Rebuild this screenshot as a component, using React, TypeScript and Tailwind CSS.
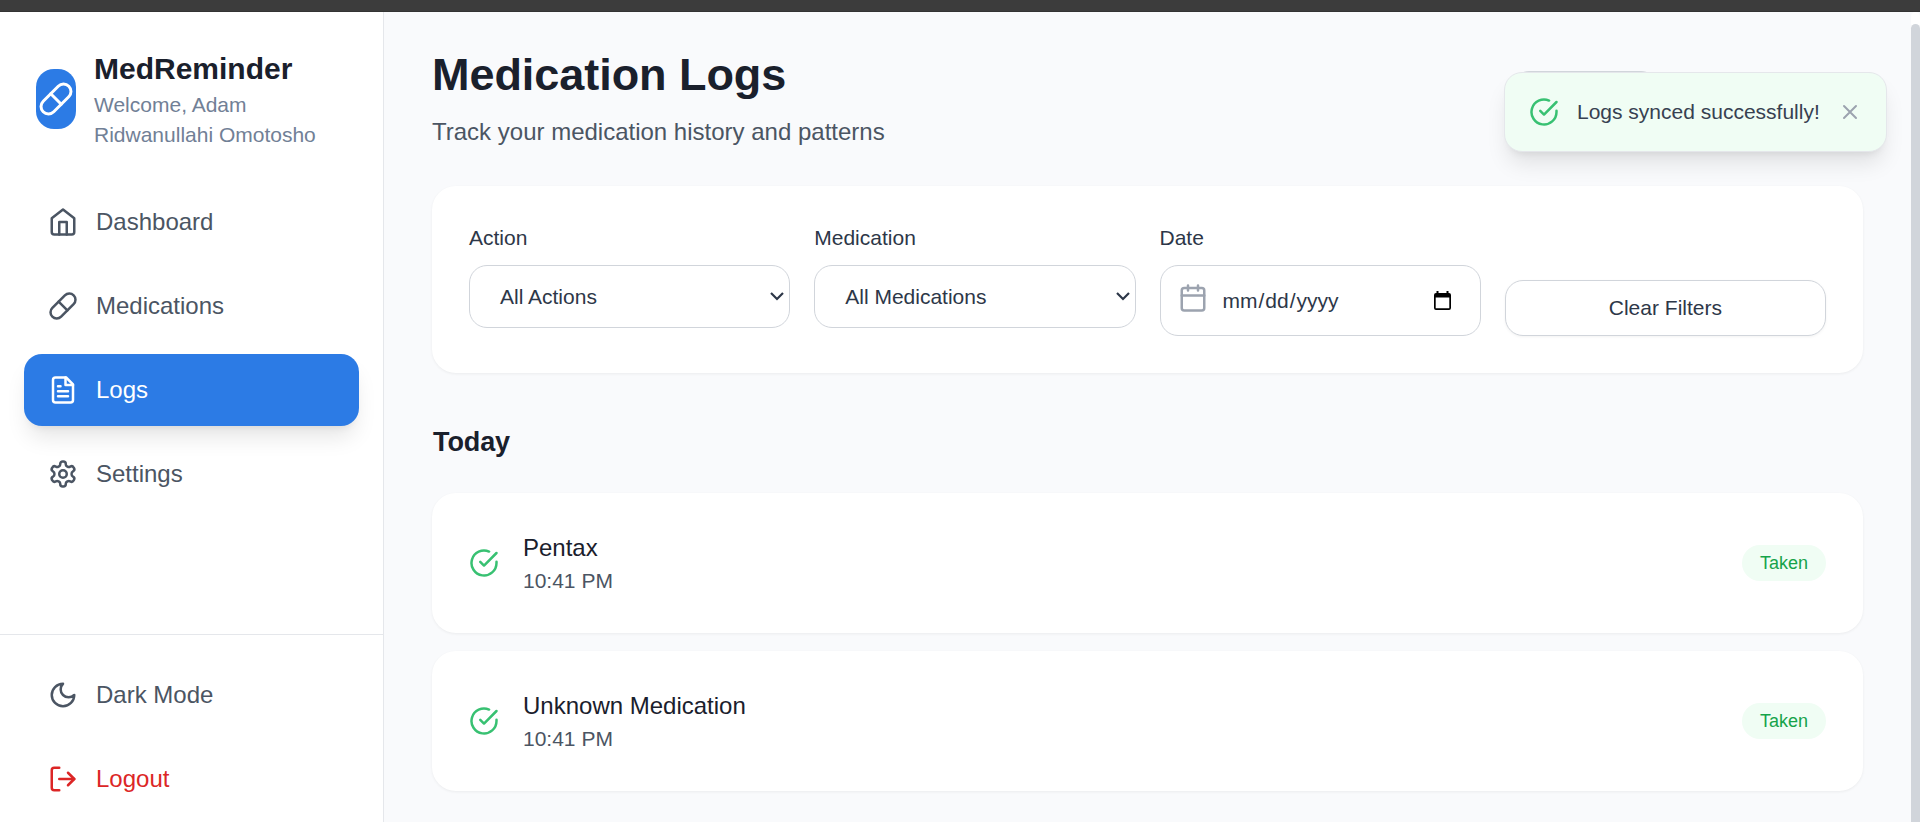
import type { ReactNode } from 'react';

type IconProps = { className?: string; children?: ReactNode };

function Icon({ className = 'size-[30px]', children }: IconProps) {
  return (
    <svg
      viewBox="0 0 24 24"
      fill="none"
      stroke="currentColor"
      strokeWidth="2"
      strokeLinecap="round"
      strokeLinejoin="round"
      className={`${className} shrink-0`}
    >
      {children}
    </svg>
  );
}

const Pill = ({ className }: IconProps) => (
  <Icon className={className}>
    <path d="m10.5 20.5 10-10a4.95 4.95 0 1 0-7-7l-10 10a4.95 4.95 0 1 0 7 7Z" />
    <path d="m8.5 8.5 7 7" />
  </Icon>
);

const Home = () => (
  <Icon>
    <path d="m3 9 9-7 9 7v11a2 2 0 0 1-2 2H5a2 2 0 0 1-2-2z" />
    <polyline points="9 22 9 12 15 12 15 22" />
  </Icon>
);

const FileText = () => (
  <Icon>
    <path d="M14.5 2H6a2 2 0 0 0-2 2v16a2 2 0 0 0 2 2h12a2 2 0 0 0 2-2V7.5L14.5 2z" />
    <polyline points="14 2 14 8 20 8" />
    <path d="M16 13H8M16 17H8M10 9H8" />
  </Icon>
);

const Settings = () => (
  <Icon>
    <path d="M12.22 2h-.44a2 2 0 0 0-2 2v.18a2 2 0 0 1-1 1.73l-.43.25a2 2 0 0 1-2 0l-.15-.08a2 2 0 0 0-2.73.73l-.22.38a2 2 0 0 0 .73 2.73l.15.1a2 2 0 0 1 1 1.72v.51a2 2 0 0 1-1 1.74l-.15.09a2 2 0 0 0-.73 2.73l.22.38a2 2 0 0 0 2.73.73l.15-.08a2 2 0 0 1 2 0l.43.25a2 2 0 0 1 1 1.73V20a2 2 0 0 0 2 2h.44a2 2 0 0 0 2-2v-.18a2 2 0 0 1 1-1.73l.43-.25a2 2 0 0 1 2 0l.15.08a2 2 0 0 0 2.73-.73l.22-.39a2 2 0 0 0-.73-2.73l-.15-.08a2 2 0 0 1-1-1.74v-.5a2 2 0 0 1 1-1.74l.15-.09a2 2 0 0 0 .73-2.73l-.22-.38a2 2 0 0 0-2.73-.73l-.15.08a2 2 0 0 1-2 0l-.43-.25a2 2 0 0 1-1-1.73V4a2 2 0 0 0-2-2z" />
    <circle cx="12" cy="12" r="3" />
  </Icon>
);

const Moon = () => (
  <Icon>
    <path d="M12 3a6 6 0 0 0 9 9 9 9 0 1 1-9-9Z" />
  </Icon>
);

const LogOut = () => (
  <Icon>
    <path d="M9 21H5a2 2 0 0 1-2-2V5a2 2 0 0 1 2-2h4" />
    <polyline points="16 17 21 12 16 7" />
    <path d="M21 12H9" />
  </Icon>
);

const CheckCircle = () => (
  <Icon className="size-[30px] text-[#38c172]">
    <path d="M22 11.08V12a10 10 0 1 1-5.93-9.14" />
    <polyline points="22 4 12 14.01 9 11.01" />
  </Icon>
);

const Calendar = () => (
  <Icon className="size-[30px] text-[#9ca3af]">
    <rect x="3" y="4" width="18" height="18" rx="2" />
    <path d="M16 2v4M8 2v4M3 10h18" />
  </Icon>
);

function NavItem({ icon, label, tone = 'text-[#4b5563]' }: { icon: ReactNode; label: string; tone?: string }) {
  return (
    <button className={`flex h-[72px] w-full items-center gap-[18px] rounded-[18px] px-6 text-2xl leading-9 ${tone}`}>
      {icon}
      <span>{label}</span>
    </button>
  );
}

function SelectField({ label, value }: { label: string; value: string }) {
  return (
    <div>
      <div className="mb-3 leading-[30px]">{label}</div>
      <div className="flex h-[63px] items-center justify-between rounded-[18px] border border-[#d1d5db] bg-white pr-[5px] pl-[30px]">
        <span>{value}</span>
        <svg viewBox="0 0 14 9" fill="none" stroke="currentColor" strokeWidth="2.2" className="h-[9px] w-[14px]">
          <path d="M1 1l6 6 6-6" />
        </svg>
      </div>
    </div>
  );
}

function LogCard({ name, time }: { name: string; time: string }) {
  return (
    <div className="flex h-[140px] items-center justify-between rounded-3xl border border-transparent bg-white px-9 shadow-[0_1px_3px_rgba(0,0,0,0.06)]">
      <div className="flex items-center gap-6">
        <CheckCircle />
        <div>
          <div className="text-2xl leading-9 text-[#1a202c]">{name}</div>
          <div className="text-[21px] leading-[30px] text-[#4b5563]">{time}</div>
        </div>
      </div>
      <span className="flex h-9 items-center rounded-full bg-[#f0fdf4] px-[18px] text-lg leading-6 text-[#16a34a]">Taken</span>
    </div>
  );
}

export default function App() {
  return (
    <div className="relative flex h-[822px] w-[1920px] flex-col overflow-hidden bg-[#f9fafc] font-['Liberation_Sans',Arial,sans-serif]">
      <div className="h-3 shrink-0 border-b border-[#333333] bg-[#3c3c3c]" />

      <div className="flex min-h-0 flex-1 overflow-hidden">
        <aside className="flex w-96 shrink-0 flex-col border-r border-[#e5e7eb] bg-white">
          <div className="flex shrink-0 items-center gap-[18px] p-9">
            <div className="flex h-[60px] w-10 shrink-0 items-center justify-center rounded-[18px] bg-[#2c7be5] text-white">
              <Pill className="size-9" />
            </div>
            <div>
              <div className="text-[30px] leading-[42px] font-bold text-[#1a202c]">MedReminder</div>
              <div className="text-[21px] leading-[30px] text-[#718096]">
                Welcome, Adam
                <br />
                <span className="whitespace-nowrap">Ridwanullahi Omotosho</span>
              </div>
            </div>
          </div>
          <nav className="flex h-[448px] shrink-0 flex-col gap-3 px-6">
            <NavItem icon={<Home />} label="Dashboard" />
            <NavItem icon={<Pill className="size-[30px]" />} label="Medications" />
            <NavItem
              icon={<FileText />}
              label="Logs"
              tone="bg-[#2c7be5] text-white shadow-[0_15px_22px_-4px_rgba(0,0,0,0.1),0_6px_9px_-6px_rgba(0,0,0,0.1)]"
            />
            <NavItem icon={<Settings />} label="Settings" />
          </nav>
          <div className="flex shrink-0 flex-col gap-3 border-t border-[#e5e7eb] p-6">
            <NavItem icon={<Moon />} label="Dark Mode" />
            <NavItem icon={<LogOut />} label="Logout" tone="text-[#dc2626]" />
          </div>
        </aside>

        <main className="min-w-0 flex-1 px-12 pt-9">
          <header className="flex items-center justify-between">
            <div>
              <h1 className="text-[45px] leading-[54px] font-bold tracking-[-0.05px] text-[#1a202c]">Medication Logs</h1>
              <p className="mt-3 text-2xl leading-9 text-[#4b5563]">Track your medication history and patterns</p>
            </div>
            <div className="mr-[204px] h-14 w-[148px] rounded-[18px] border border-[#d1d5db] bg-white" />
          </header>

          <section className="mt-9 grid h-[187px] grid-cols-4 gap-6 rounded-3xl border border-transparent bg-white p-9 text-[21px] text-[#2d3748] shadow-[0_1px_3px_rgba(0,0,0,0.06)]">
            <SelectField label="Action" value="All Actions" />
            <SelectField label="Medication" value="All Medications" />
            <div>
              <div className="mb-3 leading-[30px]">Date</div>
              <div className="flex h-[71px] items-center rounded-[18px] border border-[#d1d5db] bg-white pr-[29px] pl-[17px]">
                <div className="mb-1.5 flex">
                  <Calendar />
                </div>
                <div className="ml-3.5 flex flex-1 items-center">
                  <span className="px-px">mm</span>
                  <span>/</span>
                  <span className="px-px">dd</span>
                  <span>/</span>
                  <span className="px-px">yyyy</span>
                </div>
                <svg viewBox="0 0 17 19" className="mb-px h-[19px] w-[17px] text-black">
                  <path fill="currentColor" d="M2.5 0h2v2h8V0h2v2H15a2 2 0 0 1 2 2v13a2 2 0 0 1-2 2H2a2 2 0 0 1-2-2V4a2 2 0 0 1 2-2h.5zM1.7 6.5v10.8h13.6V6.5z" />
                </svg>
              </div>
            </div>
            <div className="flex items-end">
              <button className="h-14 w-full rounded-[18px] border border-[#d1d5db] bg-white shadow-[0_1px_3px_rgba(0,0,0,0.05)]">
                Clear Filters
              </button>
            </div>
          </section>

          <h2 className="mt-12 pl-px text-[27px] leading-[42px] font-bold tracking-[-0.1px] text-[#1a202c]">Today</h2>
          <div className="mt-[30px] flex flex-col gap-[18px]">
            <LogCard name="Pentax" time="10:41 PM" />
            <LogCard name="Unknown Medication" time="10:41 PM" />
          </div>
        </main>

        <div className="w-[9px] shrink-0 rounded-t-full bg-white pt-3">
          <div className="h-full rounded-t-full bg-[#d1d5db]" />
        </div>
      </div>

      <div className="absolute top-[72px] right-[33px] flex h-20 w-[383px] items-center rounded-[18px] border border-[#e5e7eb] bg-[#f0fdf4] px-6 shadow-[0_15px_22px_-4px_rgba(0,0,0,0.1),0_6px_9px_-6px_rgba(0,0,0,0.1)]">
        <CheckCircle />
        <span className="ml-[18px] flex-1 text-[21px] leading-[30px] whitespace-nowrap text-[#374151]">Logs synced successfully!</span>
        <Icon className="size-6 text-[#9ca3af]">
          <path d="M18 6 6 18M6 6l12 12" />
        </Icon>
      </div>
    </div>
  );
}
